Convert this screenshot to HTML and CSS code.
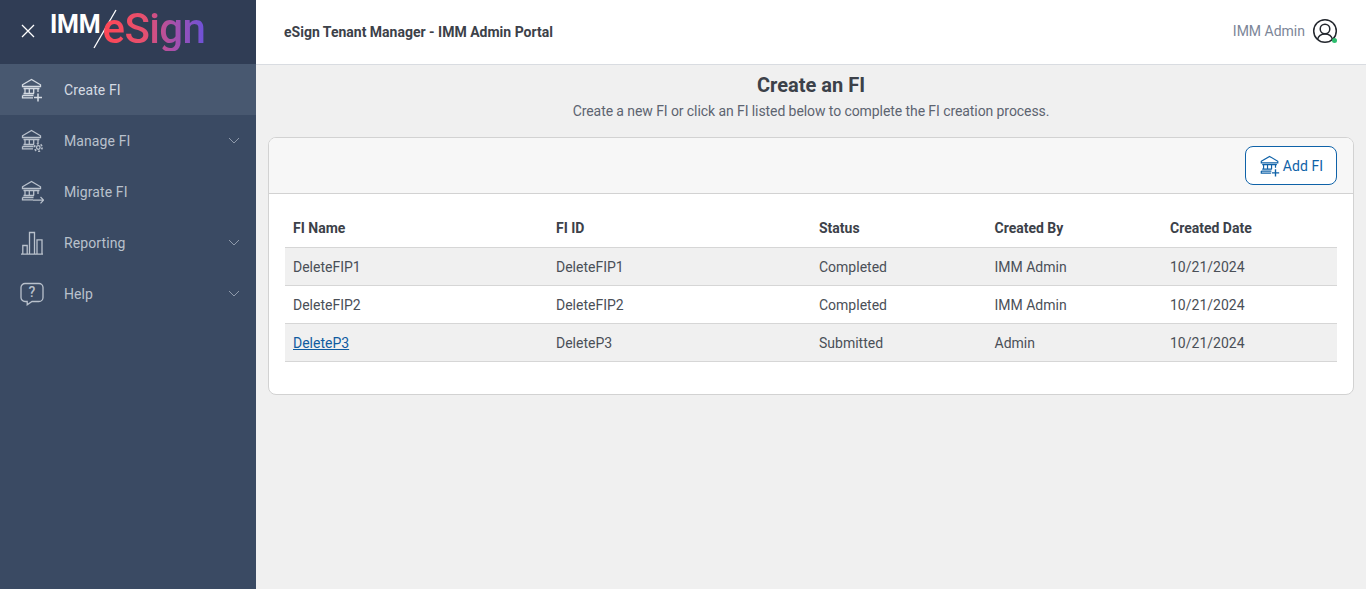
FILE: index.html
```html
<!DOCTYPE html>
<html lang="en">
<head>
<meta charset="utf-8">
<title>eSign Tenant Manager</title>
<link rel="stylesheet" href="styles.css">
</head>
<body>
<svg class="defs" width="0" height="0" aria-hidden="true">
  <symbol id="bank" viewBox="0 0 24 24">
    <path d="M2.500 6.800 11.500 1.500 20.500 6.800V8.500H2.500ZM3.500 10.500H19.500M5 10.500V15.500M9.300 10.500V15.500M13.700 10.500V15.500M18 10.500V14M3.500 15.500H14M2.500 17.500H13.500M2.500 17.500V19.800H13" fill="none" stroke="currentColor" stroke-width="1.300"/>
  </symbol>
</svg>
<div class="app">
  <aside class="sidebar">
    <div class="brand">
      <svg class="close" viewBox="0 0 14 14"><path d="M1 1 13 13M13 1 1 13" stroke="currentColor" stroke-width="1.300" fill="none"/></svg>
      <div class="logo">
        <span class="logo-imm">IMM</span>
        <svg class="logo-slash" viewBox="0 0 24 40"><path d="M23 1 1 39" stroke="#fff" stroke-width="1.300" fill="none"/></svg>
        <span class="logo-esign">eSign</span>
      </div>
    </div>
    <nav class="nav">
      <a class="nav-item active">
        <svg class="nav-icon" viewBox="0 0 24 24"><use href="#bank"/><path d="M18 15.500V23.500M14 19.500H22" stroke="currentColor" stroke-width="1.500" fill="none"/></svg>
        <span class="nav-label">Create FI</span>
      </a>
      <a class="nav-item">
        <svg class="nav-icon" viewBox="0 0 24 24"><use href="#bank"/><circle cx="18.300" cy="18.500" r="1.800" fill="none" stroke="currentColor" stroke-width="1.300"/><circle cx="18.300" cy="18.500" r="3.800" fill="none" stroke="currentColor" stroke-width="1.600" stroke-dasharray="2 1.980"/></svg>
        <span class="nav-label">Manage FI</span>
        <svg class="chev" viewBox="0 0 12 7"><path d="M1 1 6 6 11 1" fill="none" stroke="currentColor"/></svg>
      </a>
      <a class="nav-item">
        <svg class="nav-icon" viewBox="0 0 24 24"><use href="#bank"/><path d="M13 20.200H23.500M20.500 17 23.500 20.200 20.500 23.400" stroke="currentColor" stroke-width="1.200" fill="none"/></svg>
        <span class="nav-label">Migrate FI</span>
      </a>
      <a class="nav-item">
        <svg class="nav-icon" viewBox="0 0 24 24"><path d="M1 23.200H23M2.800 23.200V14.500H7.200V23.200M9.500 23.200V1.500H14.500V23.200M17 23.200V8.800H22V23.200" fill="none" stroke="currentColor" stroke-width="1.300"/></svg>
        <span class="nav-label">Reporting</span>
        <svg class="chev" viewBox="0 0 12 7"><path d="M1 1 6 6 11 1" fill="none" stroke="currentColor"/></svg>
      </a>
      <a class="nav-item">
        <svg class="nav-icon" viewBox="0 0 24 24"><path d="M5 1.500H19A4 4 0 0 1 23 5.500V15.500A4 4 0 0 1 19 19.500H12L7.200 22.800V19.500H5A4 4 0 0 1 1 15.500V5.500A4 4 0 0 1 5 1.500Z" fill="none" stroke="currentColor" stroke-width="1.300"/><text x="12" y="15" class="qmark">?</text></svg>
        <span class="nav-label">Help</span>
        <svg class="chev" viewBox="0 0 12 7"><path d="M1 1 6 6 11 1" fill="none" stroke="currentColor"/></svg>
      </a>
    </nav>
  </aside>
  <div class="main">
    <header class="topbar">
      <div class="portal">eSign Tenant Manager - IMM Admin Portal</div>
      <div class="user">
        <span class="user-name">IMM Admin</span>
        <span class="avatar">
          <svg viewBox="0 0 26 26"><circle cx="13" cy="13" r="11.300" fill="none" stroke="#23272e" stroke-width="1.500"/><circle cx="13" cy="11" r="4.800" fill="none" stroke="#23272e" stroke-width="1.500"/><path d="M5.500 21.500C6.500 17.500 9 16 13 16S19.500 17.500 20.500 21.500" fill="none" stroke="#23272e" stroke-width="1.500"/></svg>
          <span class="status-dot"></span>
        </span>
      </div>
    </header>
    <main class="content">
      <div class="page-head">
        <h1>Create an FI</h1>
        <p>Create a new FI or click an FI listed below to complete the FI creation process.</p>
      </div>
      <section class="card">
        <div class="card-head">
          <button class="add-btn" type="button">
            <svg class="add-icon" viewBox="0 0 24 24"><use href="#bank"/><path d="M18 15.500V23.500M14 19.500H22" stroke="currentColor" stroke-width="1.500" fill="none"/></svg>
            Add FI
          </button>
        </div>
        <div class="card-body">
          <table class="grid">
            <thead>
              <tr><th class="c1">FI Name</th><th class="c2">FI ID</th><th class="c3">Status</th><th class="c4">Created By</th><th>Created Date</th></tr>
            </thead>
            <tbody>
              <tr><td>DeleteFIP1</td><td>DeleteFIP1</td><td>Completed</td><td>IMM Admin</td><td>10/21/2024</td></tr>
              <tr><td>DeleteFIP2</td><td>DeleteFIP2</td><td>Completed</td><td>IMM Admin</td><td>10/21/2024</td></tr>
              <tr><td><a class="fi-link" href="#">DeleteP3</a></td><td>DeleteP3</td><td>Submitted</td><td>Admin</td><td>10/21/2024</td></tr>
            </tbody>
          </table>
        </div>
      </section>
    </main>
  </div>
</div>
</body>
</html>
```
FILE: styles.css
```css
* { box-sizing: border-box; }
html, body { margin: 0; height: 100%; overflow: hidden; }
body { font-family: Roboto, "Liberation Sans", sans-serif; font-size: 14px; color: #3c4149; background: #f0f0f0; }
.defs { position: absolute; }
.app { display: flex; height: 589px; }

.sidebar { width: 256px; flex: none; background: #3a4a63; color: #b9c1cc; }
.brand { height: 64px; background: #303d55; display: flex; align-items: flex-start; color: #fff; }
.close { width: 14px; height: 14px; margin: 24px 0 0 21px; flex: none; }
.logo { display: flex; align-items: flex-start; margin-left: 15px; height: 64px; }
.logo-imm { font-size: 25px; font-weight: 700; color: #fff; line-height: 24px; margin-top: 13px; letter-spacing: -0.2px; }
.logo-slash { width: 24px; height: 40px; margin: 9px 0 0 -8px; flex: none; }
.logo-esign { font-size: 42px; line-height: 44px; margin: 7px 0 0 -14px; font-weight: 500; letter-spacing: -0.6px; background: linear-gradient(90deg, #ff4654 0%, #e5506f 40%, #a650ac 70%, #6c52d8 100%); -webkit-background-clip: text; background-clip: text; color: transparent; }

.nav { display: flex; flex-direction: column; gap: 0; }
.nav-item { height: 51px; display: flex; align-items: center; padding: 0 16px 0 20px; }
.nav-item.active { background: #485870; color: #d5dbe3; }
.nav-icon { width: 24px; height: 24px; flex: none; margin-right: 20px; }
.nav-label { flex: 1; font-size: 14px; letter-spacing: 0.1px; }
.chev { width: 12px; height: 7px; flex: none; color: #8f9aab; }
.qmark { font-size: 14px; font-weight: 500; text-anchor: middle; fill: currentColor; }

.main { flex: 1; min-width: 0; display: flex; flex-direction: column; }
.topbar { height: 65px; flex: none; background: #fff; border-bottom: 1px solid #d9dce1; display: flex; align-items: center; justify-content: space-between; padding: 0 28px; }
.portal { font-size: 14px; font-weight: 700; color: #3c4149; }
.user { display: flex; align-items: center; gap: 7px; margin-bottom: 2px; }
.user-name { color: #7c8698; font-size: 14px; }
.avatar { position: relative; width: 26px; height: 26px; display: block; }
.avatar svg { width: 26px; height: 26px; display: block; }
.status-dot { position: absolute; right: 1px; bottom: 1px; width: 5px; height: 5px; border-radius: 50%; background: #2dbd6e; }

.content { flex: 1; padding: 0 12px; }
.page-head { text-align: center; height: 72px; padding-top: 8px; }
.page-head h1 { margin: 0; font-size: 20px; line-height: 24px; font-weight: 700; color: #3c4149; }
.page-head p { margin: 4px 0 0; font-size: 14px; line-height: 20px; color: #5d6470; letter-spacing: -0.08px; }

.card { background: #fff; border: 1px solid #d2d2d2; border-radius: 8px; overflow: hidden; }
.card-head { height: 56px; background: #f7f7f7; border-bottom: 1px solid #d2d2d2; display: flex; align-items: center; justify-content: flex-end; padding: 0 16px; }
.add-btn { height: 39px; width: 92px; border: 1px solid #0f62a8; border-radius: 8px; background: #fff; color: #0f62a8; font: 14px Roboto, "Liberation Sans", sans-serif; letter-spacing: 0.1px; display: flex; align-items: center; justify-content: center; gap: 2px; padding: 0; }
.add-icon { width: 22px; height: 22px; flex: none; }
.card-body { padding: 16px 16px 32px; }
.grid { width: 100%; border-collapse: collapse; table-layout: fixed; }
.grid th { height: 37px; text-align: left; font-weight: 700; padding: 0 8px; border-bottom: 1px solid #d6d6d6; font-size: 14px; color: #3c4149; }
.grid td { height: 38px; padding: 2px 8px 0; border-bottom: 1px solid #d6d6d6; font-size: 14px; color: #4a4f57; }
.grid tbody tr:nth-child(odd) { background: #f0f0f0; }
.c1, .c2 { width: 263px; }
.c3, .c4 { width: 175.500px; }
.fi-link { color: #0f5ba0; text-decoration: underline; }
```
